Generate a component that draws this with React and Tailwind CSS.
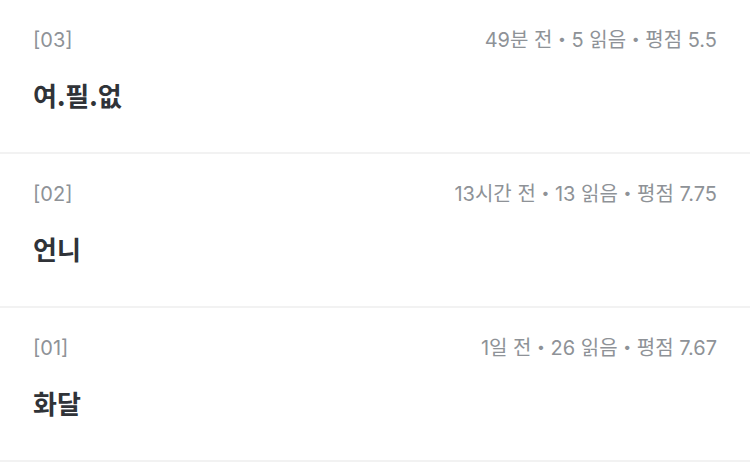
const episodes = [
  { no: '03', title: '여.필.없', time: '49분 전', reads: 5, rating: '5.5' },
  { no: '02', title: '언니', time: '13시간 전', reads: 13, rating: '7.75' },
  { no: '01', title: '화달', time: '1일 전', reads: 26, rating: '7.67' },
];

const Dot = () => <span className="inline-block align-[3px] text-[14px] leading-none">•</span>;

const App = () => {
  return (
    <div
      className="min-h-screen bg-white"
      style={{ fontFamily: 'Inter, "Noto Sans CJK KR", sans-serif' }}
    >
      {episodes.map((ep) => (
        <div key={ep.no} className="h-[154px] border-b-2 border-[#f2f2f2] px-[33px] pt-[27px]">
          <div className="flex items-center justify-between text-[20px] leading-[26px] text-[#8e9297]">
            <span>[{ep.no}]</span>
            <span>
              {ep.time} <Dot /> {ep.reads} 읽음 <Dot /> 평점 {ep.rating}
            </span>
          </div>
          <p
            className="mt-[24px] text-[26px] font-bold leading-[36px] text-[#303338]"
            style={{ fontFamily: '"Noto Sans CJK KR", sans-serif' }}
          >
            {ep.title}
          </p>
        </div>
      ))}
    </div>
  );
};

export default App;
